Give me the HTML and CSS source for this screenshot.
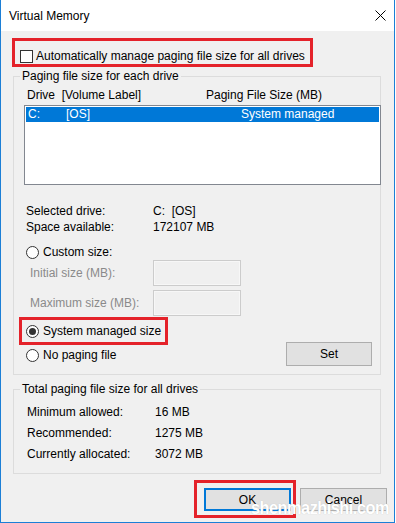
FILE: index.html
```html
<!DOCTYPE html>
<html lang="en">
<head>
    <meta charset="UTF-8">
    <meta name="viewport" content="width=device-width, initial-scale=1.0">
    <title>Virtual Memory</title>
    <link rel="stylesheet" href="styles.css">
</head>
<body>

<div class="window">
    <div class="titlebar">
        <span class="title">Virtual Memory</span>
        <svg class="close" width="11" height="11" viewBox="0 0 11 11">
            <path d="M0.5 0.5 L10.5 10.5 M10.5 0.5 L0.5 10.5" stroke="#000" stroke-width="1" fill="none"/>
        </svg>
    </div>

    <div class="content">
        <div class="mark mark-auto">
            <span class="checkbox"></span>
            <span>Automatically manage paging file size for all drives</span>
        </div>

        <fieldset class="group group-drives">
            <legend>Paging file size for each drive</legend>
            <div class="list-head">
                <span class="col-drive">Drive&nbsp;&nbsp;[Volume Label]</span>
                <span>Paging File Size (MB)</span>
            </div>
            <div class="list">
                <div class="list-row selected">
                    <span class="c-drive">C:</span>
                    <span class="c-label">[OS]</span>
                    <span>System managed</span>
                </div>
            </div>

            <div class="info">
                <div class="info-row"><span class="key">Selected drive:</span><span>C:&nbsp;&nbsp;[OS]</span></div>
                <div class="info-row"><span class="key">Space available:</span><span>172107 MB</span></div>
            </div>

            <div class="radio-row custom-row"><span class="radio"></span>Custom size:</div>
            <div class="size-row first">
                <span class="disabled key">Initial size (MB):</span>
                <span class="textbox"></span>
            </div>
            <div class="size-row">
                <span class="disabled key">Maximum size (MB):</span>
                <span class="textbox"></span>
            </div>

            <div class="bottom-grid">
                <div class="mark mark-system">
                    <span class="radio checked"></span>
                    <span>System managed size</span>
                </div>
                <div class="radio-row no-paging"><span class="radio"></span>No paging file</div>
                <button class="btn btn-set">Set</button>
            </div>
        </fieldset>

        <fieldset class="group group-total">
            <legend>Total paging file size for all drives</legend>
            <div class="total-row"><span class="key">Minimum allowed:</span><span>16 MB</span></div>
            <div class="total-row"><span class="key">Recommended:</span><span>1275 MB</span></div>
            <div class="total-row"><span class="key">Currently allocated:</span><span>3072 MB</span></div>
        </fieldset>

        <div class="actions">
            <div class="mark mark-ok">
                <button class="btn btn-ok">OK</button>
            </div>
            <button class="btn btn-cancel">Cancel</button>
        </div>
    </div>

    <div class="watermark">shenmazhishi.com</div>
</div>

</body>
</html>
```

FILE: styles.css
```css
body {
    margin: 0;
    padding: 0;
    background-color: #ffffff;
    font-family: "Liberation Sans", Arial, sans-serif;
    font-size: 12px;
    color: #000;
}

.window {
    position: relative;
    width: 395px;
    height: 523px;
    box-sizing: border-box;
    border: 1px solid #1c7fd6;
    border-top: none;
    background-color: #f0f0f0;
    overflow: hidden;
}

/* barre de titre */
.titlebar {
    height: 31px;
    background-color: #fff;
    display: flex;
    align-items: center;
    justify-content: space-between;
    padding: 0 8px 0 8px;
}

.title {
    font-size: 12px;
    line-height: 31px;
    padding-top: 2px;
}

.close {
    display: block;
    margin-top: -1px;
}

/* cadres rouges */
.mark {
    border: 3px solid #e4222a;
    box-sizing: border-box;
    display: inline-flex;
    align-items: center;
}

.mark-auto {
    margin: 7px 0 0 11px;
    height: 29px;
    padding: 7px 5px 0 5px;
}

.checkbox {
    width: 13px;
    height: 13px;
    box-sizing: border-box;
    border: 1px solid #333;
    background: #fff;
    margin-right: 3px;
}

/* groupes */
.group {
    margin: 0;
    border: 1px solid #dcdcdc;
    padding: 0 8px 0 10px;
    min-width: 0;
}

.group legend {
    padding: 0 2px;
    margin-left: -4px;
    line-height: 15px;
}

.group-drives {
    margin: 2px 13px 0 12px;
    padding-top: 3px;
    padding-bottom: 8px;
}

.list-head {
    display: flex;
    height: 16px;
    line-height: 16px;
    padding-left: 3px;
}

.col-drive {
    width: 179px;
}

.list {
    margin-top: 2px;
    margin-right: -9px;
    height: 80px;
    box-sizing: border-box;
    border: 1px solid #828790;
    background: #fff;
    padding: 1px;
}

.list-row {
    display: flex;
    height: 15px;
    line-height: 15px;
    padding-left: 2px;
}

.list-row.selected {
    background-color: #0078d7;
    color: #fff;
}

.c-drive {
    width: 38px;
}

.c-label {
    width: 175px;
}

.info {
    margin-top: 18px;
    padding-left: 2px;
}

.info-row, .total-row {
    display: flex;
    height: 16px;
    line-height: 16px;
}

.key {
    width: 127px;
}

.radio-row {
    display: flex;
    align-items: center;
    height: 15px;
    line-height: 15px;
    padding-left: 2px;
}

.custom-row {
    margin-top: 10px;
}

.radio {
    width: 13px;
    height: 13px;
    box-sizing: border-box;
    border: 1px solid #333;
    border-radius: 50%;
    background: #fff;
    margin-right: 4px;
    display: flex;
    align-items: center;
    justify-content: center;
}

.radio.checked::after {
    content: "";
    width: 7px;
    height: 7px;
    border-radius: 50%;
    background: #333;
}

.size-row {
    display: flex;
    align-items: center;
    height: 26px;
    margin-top: 4px;
    padding-left: 6px;
}

.size-row.first {
    margin-top: 0;
}

.size-row .key {
    width: 123px;
}

.disabled {
    color: #8a8a8a;
}

.textbox {
    width: 88px;
    height: 26px;
    box-sizing: border-box;
    border: 1px solid #cccccc;
    background: #f0f0f0;
    box-shadow: inset 0 0 0 1px #f7f7f7;
}

.bottom-grid {
    display: grid;
    grid-template-columns: 1fr 86px;
    margin-top: 1px;
}

.mark-system {
    grid-column: 1;
    grid-row: 1;
    justify-self: start;
    height: 28px;
    margin-left: -5px;
    padding: 0 4px 0 4px;
}

.no-paging {
    grid-column: 1;
    grid-row: 2;
    height: 16px;
    margin-top: 2px;
    margin-bottom: 3px;
}

.btn {
    font-family: "Liberation Sans", Arial, sans-serif;
    font-size: 12px;
    color: #000;
    background-color: #e1e1e1;
    border: 1px solid #adadad;
    padding: 0;
    margin: 0;
}

.btn-set {
    grid-column: 2;
    grid-row: 1 / span 2;
    align-self: end;
    height: 24px;
}

.group-total {
    margin: 7px 13px 0 12px;
    padding-top: 5px;
    padding-bottom: 8px;
}

.total-row {
    height: 21px;
    line-height: 21px;
    padding-left: 3px;
}

.total-row .key {
    width: 128px;
}

/* boutons du bas */
.actions {
    display: flex;
    justify-content: flex-end;
    align-items: flex-start;
    margin-top: 6px;
    padding-right: 7px;
}

.mark-ok {
    height: 38px;
    padding: 5px 2px 4px 7px;
    align-items: flex-start;
}

.btn-ok {
    width: 87px;
    height: 23px;
    border: 2px solid #0078d7;
}

.btn-cancel {
    width: 87px;
    height: 23px;
    margin-left: 4px;
    margin-top: 8px;
}

/* filigrane */
.watermark {
    position: absolute;
    left: 250px;
    top: 498px;
    white-space: nowrap;
    font-family: "Liberation Sans", Arial, sans-serif;
    font-weight: bold;
    font-size: 19px;
    line-height: 20px;
    letter-spacing: -0.6px;
    color: #fff;
    text-shadow: 0 0 1px #b8b8b8;
    transform: scaleX(0.86);
    transform-origin: left top;
}
```
